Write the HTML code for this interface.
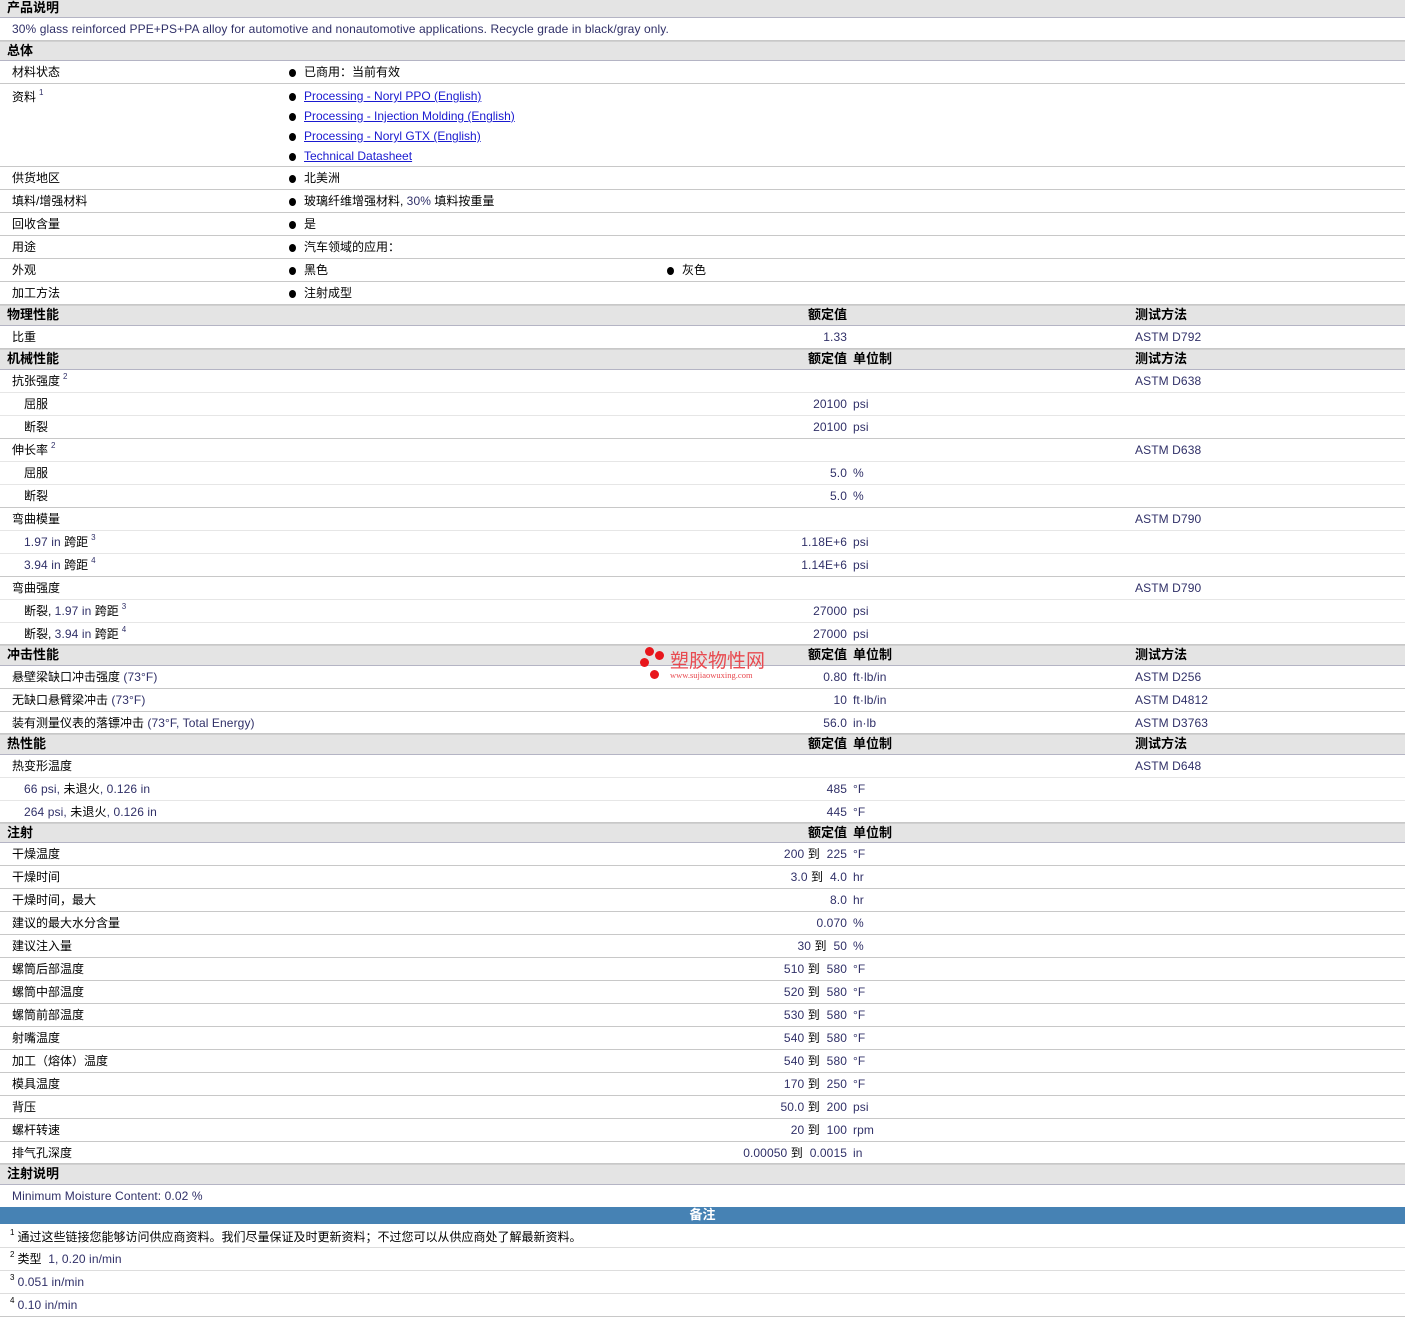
<!DOCTYPE html>
<html><head><meta charset="utf-8">
<style>
*{margin:0;padding:0;box-sizing:border-box}
body{width:1405px;height:1330px;background:#fff;font-family:"Liberation Sans","Noto Sans CJK SC",sans-serif;font-size:12px;color:#000;overflow:hidden;position:relative}
.r{position:relative;height:23px;line-height:22px;border-bottom:1px solid #c8c8c8;white-space:nowrap}
.r.x{border-bottom-color:#e6e6e6}
.h{position:relative;height:21px;line-height:18px;background:#e4e4e4;border-bottom:1px solid #b4b4c4;border-top:1px solid #d0d0d0;font-weight:bold;font-size:13px;white-space:nowrap}
.h span,.r span{position:absolute;top:0}
.l{left:12px}.h .l{left:7px}
.s{left:24px}
.v{right:558px;text-align:right}
.u{left:853px}
.t{left:1135px}
.b{left:289px}.b2{left:667px}
.b::before,.b2::before{content:"";display:inline-block;width:7px;height:8px;border-radius:50%;background:#000;margin-right:8px;vertical-align:-1px}
.e{color:#303068;letter-spacing:0.1px}
sup{font-size:8px;vertical-align:6px;line-height:0;color:#303068;margin-left:3px}
a{color:#1a1ad0;text-decoration:underline}
.blue{height:17px;background:#4682b4;color:#fff;font-weight:bold;font-size:13px;text-align:center;line-height:16px}
</style></head><body>
<div class="h" style="border-top:none;height:18px;line-height:16px"><span class="l">产品说明</span></div>
<div class="r"><span class="l e">30% glass reinforced PPE+PS+PA alloy for automotive and nonautomotive applications. Recycle grade in black/gray only.</span></div>
<div class="h" style="height:20px"><span class="l">总体</span></div>
<div class="r"><span class="l">材料状态</span><span class="b">已商用：当前有效</span></div>
<div class="r" style="height:83px"><span class="l" style="top:2px">资料<sup>1</sup></span>
<span class="b" style="top:1px"><a>Processing - Noryl PPO (English)</a></span>
<span class="b" style="top:21px"><a>Processing - Injection Molding (English)</a></span>
<span class="b" style="top:41px"><a>Processing - Noryl GTX (English)</a></span>
<span class="b" style="top:61px"><a>Technical Datasheet</a></span></div>
<div class="r"><span class="l">供货地区</span><span class="b">北美洲</span></div>
<div class="r"><span class="l">填料/增强材料</span><span class="b">玻璃纤维增强材料, <span class="e" style="position:static">30%</span> 填料按重量</span></div>
<div class="r"><span class="l">回收含量</span><span class="b">是</span></div>
<div class="r"><span class="l">用途</span><span class="b">汽车领域的应用：</span></div>
<div class="r"><span class="l">外观</span><span class="b">黑色</span><span class="b2">灰色</span></div>
<div class="r"><span class="l">加工方法</span><span class="b">注射成型</span></div>
<div class="h"><span class="l">物理性能</span><span class="v">额定值</span><span class="t">测试方法</span></div>
<div class="r"><span class="l">比重</span><span class="v e">1.33</span><span class="t e">ASTM D792</span></div>
<div class="h"><span class="l">机械性能</span><span class="v">额定值</span><span class="u">单位制</span><span class="t">测试方法</span></div>
<div class="r x"><span class="l">抗张强度<sup>2</sup></span><span class="t e">ASTM D638</span></div>
<div class="r x"><span class="s">屈服</span><span class="v e">20100</span><span class="u e">psi</span></div>
<div class="r"><span class="s">断裂</span><span class="v e">20100</span><span class="u e">psi</span></div>
<div class="r x"><span class="l">伸长率<sup>2</sup></span><span class="t e">ASTM D638</span></div>
<div class="r x"><span class="s">屈服</span><span class="v e">5.0</span><span class="u e">%</span></div>
<div class="r"><span class="s">断裂</span><span class="v e">5.0</span><span class="u e">%</span></div>
<div class="r x"><span class="l">弯曲模量</span><span class="t e">ASTM D790</span></div>
<div class="r x"><span class="s"><span class="e" style="position:static">1.97 in</span> 跨距<sup>3</sup></span><span class="v e">1.18E+6</span><span class="u e">psi</span></div>
<div class="r"><span class="s"><span class="e" style="position:static">3.94 in</span> 跨距<sup>4</sup></span><span class="v e">1.14E+6</span><span class="u e">psi</span></div>
<div class="r x"><span class="l">弯曲强度</span><span class="t e">ASTM D790</span></div>
<div class="r x"><span class="s">断裂, <span class="e" style="position:static">1.97 in</span> 跨距<sup>3</sup></span><span class="v e">27000</span><span class="u e">psi</span></div>
<div class="r" style="height:22px"><span class="s">断裂, <span class="e" style="position:static">3.94 in</span> 跨距<sup>4</sup></span><span class="v e">27000</span><span class="u e">psi</span></div>
<div class="h"><span class="l">冲击性能</span><span class="v">额定值</span><span class="u">单位制</span><span class="t">测试方法</span></div>
<div class="r"><span class="l">悬壁梁缺口冲击强度 <span class="e" style="position:static">(73°F)</span></span><span class="v e">0.80</span><span class="u e">ft·lb/in</span><span class="t e">ASTM D256</span></div>
<div class="r"><span class="l">无缺口悬臂梁冲击 <span class="e" style="position:static">(73°F)</span></span><span class="v e">10</span><span class="u e">ft·lb/in</span><span class="t e">ASTM D4812</span></div>
<div class="r" style="height:22px"><span class="l">装有测量仪表的落镖冲击 <span class="e" style="position:static">(73°F, Total Energy)</span></span><span class="v e">56.0</span><span class="u e">in·lb</span><span class="t e">ASTM D3763</span></div>
<div class="h"><span class="l">热性能</span><span class="v">额定值</span><span class="u">单位制</span><span class="t">测试方法</span></div>
<div class="r x"><span class="l">热变形温度</span><span class="t e">ASTM D648</span></div>
<div class="r x"><span class="s e">66 psi, <span style="position:static;color:#000">未退火</span>, 0.126 in</span><span class="v e">485</span><span class="u e">°F</span></div>
<div class="r" style="height:22px"><span class="s e">264 psi, <span style="position:static;color:#000">未退火</span>, 0.126 in</span><span class="v e">445</span><span class="u e">°F</span></div>
<div class="h" style="height:20px"><span class="l">注射</span><span class="v">额定值</span><span class="u">单位制</span></div>
<div class="r"><span class="l">干燥温度</span><span class="v e">200 <b style="font-weight:normal;color:#000">到</b>&nbsp; 225</span><span class="u e">°F</span></div>
<div class="r"><span class="l">干燥时间</span><span class="v e">3.0 <b style="font-weight:normal;color:#000">到</b>&nbsp; 4.0</span><span class="u e">hr</span></div>
<div class="r"><span class="l">干燥时间，最大</span><span class="v e">8.0</span><span class="u e">hr</span></div>
<div class="r"><span class="l">建议的最大水分含量</span><span class="v e">0.070</span><span class="u e">%</span></div>
<div class="r"><span class="l">建议注入量</span><span class="v e">30 <b style="font-weight:normal;color:#000">到</b>&nbsp; 50</span><span class="u e">%</span></div>
<div class="r"><span class="l">螺筒后部温度</span><span class="v e">510 <b style="font-weight:normal;color:#000">到</b>&nbsp; 580</span><span class="u e">°F</span></div>
<div class="r"><span class="l">螺筒中部温度</span><span class="v e">520 <b style="font-weight:normal;color:#000">到</b>&nbsp; 580</span><span class="u e">°F</span></div>
<div class="r"><span class="l">螺筒前部温度</span><span class="v e">530 <b style="font-weight:normal;color:#000">到</b>&nbsp; 580</span><span class="u e">°F</span></div>
<div class="r"><span class="l">射嘴温度</span><span class="v e">540 <b style="font-weight:normal;color:#000">到</b>&nbsp; 580</span><span class="u e">°F</span></div>
<div class="r"><span class="l">加工（熔体）温度</span><span class="v e">540 <b style="font-weight:normal;color:#000">到</b>&nbsp; 580</span><span class="u e">°F</span></div>
<div class="r"><span class="l">模具温度</span><span class="v e">170 <b style="font-weight:normal;color:#000">到</b>&nbsp; 250</span><span class="u e">°F</span></div>
<div class="r"><span class="l">背压</span><span class="v e">50.0 <b style="font-weight:normal;color:#000">到</b>&nbsp; 200</span><span class="u e">psi</span></div>
<div class="r"><span class="l">螺杆转速</span><span class="v e">20 <b style="font-weight:normal;color:#000">到</b>&nbsp; 100</span><span class="u e">rpm</span></div>
<div class="r" style="height:22px"><span class="l">排气孔深度</span><span class="v e">0.00050 <b style="font-weight:normal;color:#000">到</b>&nbsp; 0.0015</span><span class="u e">in</span></div>
<div class="h"><span class="l">注射说明</span></div>
<div class="r" style="border:none;height:22px"><span class="l e">Minimum Moisture Content: 0.02 %</span></div>
<div class="blue">备注</div>
<div class="r" style="border-bottom-color:#ddd;height:24px;line-height:26px"><span class="l" style="left:10px"><sup style="color:#000;margin:0 3px 0 0">1</sup>通过这些链接您能够访问供应商资料。我们尽量保证及时更新资料；不过您可以从供应商处了解最新资料。</span></div>
<div class="r" style="border-bottom-color:#ddd"><span class="l" style="left:10px"><sup style="color:#000;margin:0 3px 0 0">2</sup>类型 <span class="e" style="position:static">&nbsp;1, 0.20 in/min</span></span></div>
<div class="r" style="border-bottom-color:#ddd"><span class="l e" style="left:10px"><sup style="color:#000;margin:0 3px 0 0">3</sup>0.051 in/min</span></div>
<div class="r"><span class="l e" style="left:10px"><sup style="color:#000;margin:0 3px 0 0">4</sup>0.10 in/min</span></div>

<div style="position:absolute;left:640px;top:647px;width:130px;height:34px">
<div style="position:absolute;left:5px;top:0;width:9px;height:9px;border-radius:50%;background:#e8161c"></div>
<div style="position:absolute;left:15px;top:4px;width:9px;height:9px;border-radius:50%;background:#e8161c"></div>
<div style="position:absolute;left:0px;top:11px;width:9px;height:9px;border-radius:50%;background:#e8161c"></div>
<div style="position:absolute;left:10px;top:23px;width:9px;height:9px;border-radius:50%;background:#e8161c"></div>
<div style="position:absolute;left:30px;top:3px;font-size:19px;line-height:20px;color:#e84a50;font-family:'Noto Sans CJK SC',sans-serif">塑胶物性网</div>
<div style="position:absolute;left:30px;top:24px;font-size:8.5px;line-height:9px;color:#e84a50;font-family:'Liberation Serif',serif">www.sujiaowuxing.com</div>
</div>
</body></html>
